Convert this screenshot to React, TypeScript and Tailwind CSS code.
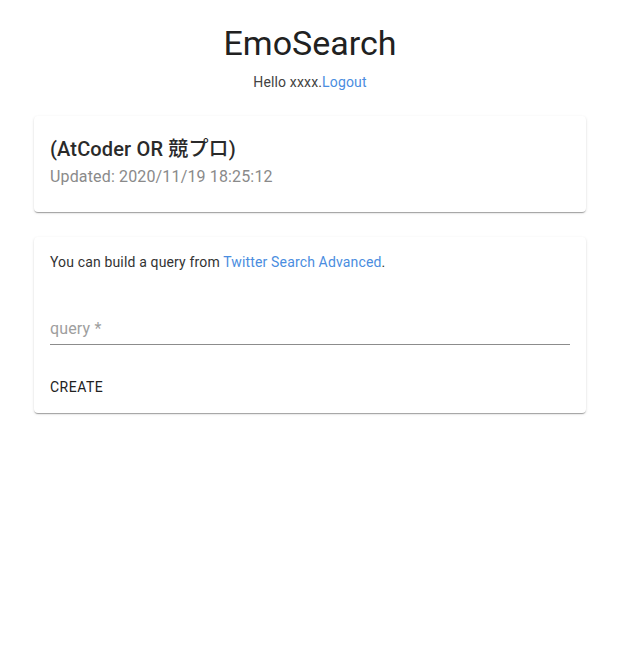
import React from "react";

export default function App() {
  return (
    <div
      className="min-h-[656px] bg-white text-[#212121]"
      style={{ fontFamily: 'Roboto, "Noto Sans CJK JP", sans-serif' }}
    >
      <div className="pl-[34px] pr-[42px] pt-[22px]">
        <h1 className="text-center text-[34px] leading-[42px] font-normal text-[#212121]">
          EmoSearch
        </h1>
        <p className="mt-[8px] text-center text-[14px] leading-[20px] tracking-[0.15px] text-[#424242]">
          Hello xxxx.<a className="text-[#4a8de0]">Logout</a>
        </p>

        <div className="mt-[24px] rounded-[4px] bg-white px-[16px] pt-[17px] pb-[23px] shadow-[0_2px_1px_-1px_rgba(0,0,0,0.2),0_1px_1px_0_rgba(0,0,0,0.14),0_1px_3px_0_rgba(0,0,0,0.12)]">
          <div className="text-[20px] leading-[32px] font-medium tracking-[0.15px] text-[#2a2a2a]">
            (AtCoder OR 競プロ)
          </div>
          <div className="text-[16px] leading-[24px] tracking-[0.15px] text-[#8a8a8a]">
            Updated: 2020/11/19 18:25:12
          </div>
        </div>

        <div className="mt-[25px] rounded-[4px] bg-white px-[16px] pt-[15px] pb-[14px] shadow-[0_2px_1px_-1px_rgba(0,0,0,0.2),0_1px_1px_0_rgba(0,0,0,0.14),0_1px_3px_0_rgba(0,0,0,0.12)]">
          <p className="text-[14px] leading-[20px] tracking-[0.15px] text-[#333333]">
            You can build a query from{" "}
            <a className="text-[#4a8de0]">Twitter Search Advanced</a>.
          </p>
          <div className="mt-[45px] border-b border-[#8c8c8c] pb-[3px]">
            <div className="text-[16px] leading-[24px] tracking-[0.15px] text-[#9e9e9e]">query *</div>
          </div>
          <div className="mt-[30px] text-[14px] leading-[24px] font-normal tracking-[0.5px] text-[#212121]">
            CREATE
          </div>
        </div>
      </div>
    </div>
  );
}
